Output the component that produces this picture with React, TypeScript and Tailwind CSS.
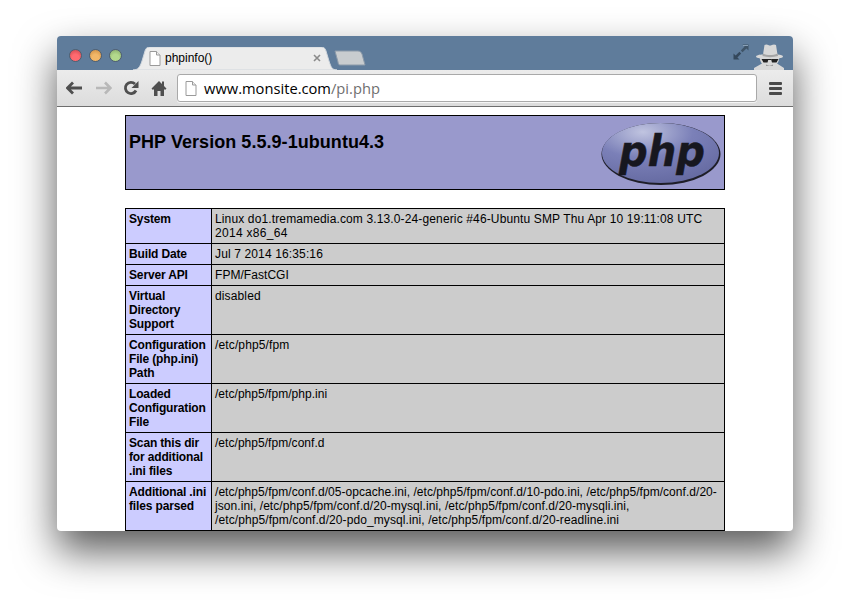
const SANS = "font-['Liberation_Sans',Arial,sans-serif]";

const rows: [string, [string, string][], string][] = [
  [
    "System",
    [
      ["Linux do1.tremamedia.com 3.13.0-24-generic #46-Ubuntu SMP Thu Apr 10 19:11:08 UTC", "tracking-[0.135px]"],
      ["2014 x86_64", "tracking-[0.3px]"],
    ],
    "h-[35px]",
  ],
  ["Build Date", [["Jul 7 2014 16:35:16", "tracking-[0.135px]"]], "h-[21px]"],
  ["Server API", [["FPM/FastCGI", "tracking-[0.05px]"]], "h-[21px]"],
  ["Virtual Directory Support", [["disabled", "tracking-[0.135px]"]], "h-[49px]"],
  ["Configuration File (php.ini) Path", [["/etc/php5/fpm", "tracking-[0.135px]"]], "h-[49px]"],
  ["Loaded Configuration File", [["/etc/php5/fpm/php.ini", "tracking-[0.04px]"]], "h-[49px]"],
  ["Scan this dir for additional .ini files", [["/etc/php5/fpm/conf.d", "tracking-[0.04px]"]], "h-[49px]"],
  [
    "Additional .ini files parsed",
    [
      ["/etc/php5/fpm/conf.d/05-opcache.ini, /etc/php5/fpm/conf.d/10-pdo.ini, /etc/php5/fpm/conf.d/20-", "tracking-[0.045px]"],
      ["json.ini, /etc/php5/fpm/conf.d/20-mysql.ini, /etc/php5/fpm/conf.d/20-mysqli.ini,", "tracking-[0.07px]"],
      ["/etc/php5/fpm/conf.d/20-pdo_mysql.ini, /etc/php5/fpm/conf.d/20-readline.ini", "tracking-[0.095px]"],
    ],
    "h-[49px]",
  ],
];

function PageIcon({ className }: { className: string }) {
  return (
    <svg viewBox="0 0 12 15" className={className}>
      <path d="M1 .5h6.5L11 4v10.5H1z" fill="#fff" stroke="#9a9a9a" />
      <path d="M7.5.5V4H11" fill="#eee" stroke="#9a9a9a" />
    </svg>
  );
}

function Light({ color, ring }: { color: string; ring: string }) {
  return (
    <div
      className="h-[13px] w-[13px] rounded-full border"
      style={{ background: `radial-gradient(circle at 50% 70%, ${color} 35%, ${ring} 100%)`, borderColor: "#4f5f70" }}
    />
  );
}

function Logo() {
  return (
    <svg viewBox="0 0 120 64" className="h-[64px] w-[120px]">
      <defs>
        <radialGradient id="lg" cx="0.35" cy="0.15" r="0.95">
          <stop offset="0" stopColor="#c0c4e0" />
          <stop offset="0.45" stopColor="#7b80b8" />
          <stop offset="1" stopColor="#62679e" />
        </radialGradient>
      </defs>
      <ellipse cx="60" cy="32" rx="59.5" ry="31" fill="#1e1e28" />
      <ellipse cx="59.5" cy="31" rx="58.5" ry="30" fill="url(#lg)" />
      <text
        x="18"
        y="44"
        fontFamily="'DejaVu Sans',sans-serif"
        fontWeight="700"
        fontStyle="italic"
        fontSize="42"
        textLength="86"
        lengthAdjust="spacingAndGlyphs"
        fill="#17171f"
        stroke="#17171f"
        strokeWidth="0.5"
      >
        php
      </text>
    </svg>
  );
}

export default function App() {
  return (
    <div className="h-[610px] w-[850px] overflow-hidden bg-white pl-[57px] pt-[36px]">
      <div className="flex h-[495px] w-[736px] flex-col overflow-hidden rounded-[4px] bg-white shadow-[0_20px_40px_rgba(0,0,0,0.65)]">
        {/* title bar */}
        <div className="flex h-[34px] shrink-0 items-end bg-[#5f7c9b]">
          <div className="flex h-full w-[76px] items-center gap-[7px] self-start pl-[12px] pt-[4px]">
            <Light color="#ff6a70" ring="#c9454c" />
            <Light color="#f2b768" ring="#c98a40" />
            <Light color="#b3d98c" ring="#85a868" />
          </div>
          <div className="relative h-[23px] w-[204px]">
            <svg viewBox="0 0 204 23" className="absolute inset-0 h-full w-full">
              <path d="M0 23C5 23 7 20 9 14L12 4C13 1 14 0 18 0H187C191 0 192 1 193 4L196 14C198 20 199 23 204 23Z" fill="#ececec" stroke="#d0d6dc" />
            </svg>
            <div className="relative flex h-full items-center pb-[1px] pl-[16px] pr-[16px]">
              <PageIcon className="h-[15px] w-[12px]" />
              <span className={`ml-[4px] flex-1 text-[12px] text-black ${SANS}`}>phpinfo()</span>
              <svg viewBox="0 0 8 8" className="h-[8px] w-[8px]">
                <path d="M1 1l6 6M7 1L1 7" stroke="#8a8a8a" strokeWidth="1.6" />
              </svg>
            </div>
          </div>
          <svg viewBox="0 0 32 17" className="mb-[3px] ml-[-3px] h-[17px] w-[32px]">
            <path d="M1 1H24C26 1 27 2 28 4L31 15H6C5 15 4 14 4 12Z" fill="#c8cccf" stroke="#8c9aa9" />
          </svg>
          <div className="flex h-full flex-1 items-end justify-end pr-[7px]">
            <svg viewBox="0 0 16 16" className="mb-[10px] mr-[3px] h-[16px] w-[16px]">
              <path d="M9.5 0.5H15.5V6.5L13.4 4.4 9.6 8.2 7.8 6.4 11.6 2.6Z" fill="#3f5468" />
              <path d="M6.5 15.5H0.5V9.5L2.6 11.6 6.4 7.8 8.2 9.6 4.4 13.4Z" fill="#34485c" />
              <path d="M10 1H15V2H10Z" fill="#8aa0b6" />
            </svg>
            <svg viewBox="0 0 34 27" className="h-[27px] w-[34px]">
              <path d="M11 11.5L12.5 2C15 0.5 16.5 2.5 18 2.5S21.5 0.5 24 2L25.5 11.5C29 11.5 31 12.5 31 13.5S29 15 27 15.5C27 18 26 19.5 25 20.5L32 25V27H2V25L10 20.5C9 19.5 8 18 8 15.5C6 15 4 14.5 4 13.5S7 11.5 11 11.5Z" fill="#d8d8d8" />
              <path d="M11 10.5C15 12.5 21 12.5 25.5 10.5L26 13C21 14.5 15 14.5 10.5 13Z" fill="#a4a4a4" />
              <path d="M9.5 16H16.5L15.5 19.5H11.5ZM19 16H26.5L24.5 19.5H20ZM16 16H19V17H16Z" fill="#222" />
              <path d="M14 21.5C16 23 19 23 21 21.5V23H14Z" fill="#9a9a9a" />
            </svg>
          </div>
        </div>
        {/* toolbar */}
        <div className="flex h-[37px] shrink-0 items-center border-b border-[#6e6e6e] bg-gradient-to-b from-[#ececec] to-[#dcdcdc] pl-[9px] pr-[11px]">
          <svg viewBox="0 0 16 14" className="h-[14px] w-[16px]">
            <path d="M7 1.5L1.5 7 7 12.5M2 7h14" fill="none" stroke="#4f4f4f" strokeWidth="2.8" />
          </svg>
          <svg viewBox="0 0 16 14" className="ml-[14px] h-[14px] w-[16px]">
            <path d="M9 1.5L14.5 7 9 12.5M14 7H0" fill="none" stroke="#b8b8b8" strokeWidth="2.6" />
          </svg>
          <svg viewBox="0 0 16 16" className="ml-[11px] h-[16px] w-[16px]">
            <path d="M13 10.5A5.6 5.6 0 1 1 12 4" fill="none" stroke="#4f4f4f" strokeWidth="2.8" />
            <path d="M15.5 1v7h-7z" fill="#4f4f4f" />
          </svg>
          <svg viewBox="0 0 16 16" className="ml-[12px] h-[16px] w-[16px]">
            <path d="M8 1L0.5 8.5 2 10 3 9v7h3.5v-5h3v5H13V9l1 1 1.5-1.5L13 6V1.5h-2V4z" fill="#4f4f4f" />
          </svg>
          <div className="ml-[10px] flex h-[28px] w-[580px] items-center rounded-[3px] border border-[#a9a9a9] bg-white pl-[7px] shadow-[0_1px_0_#f5f5f5]">
            <PageIcon className="h-[15px] w-[12px]" />
            <span className="ml-[7px] text-[14.7px] text-black font-['Open_Sans',sans-serif]">
              www.monsite.com<span className="text-[#6f6f6f]">/pi.php</span>
            </span>
          </div>
          <div className="ml-auto flex w-[13px] flex-col gap-[2px]">
            <div className="h-[3px] rounded-[1px] bg-[#4a4a4a]" />
            <div className="h-[3px] rounded-[1px] bg-[#4a4a4a]" />
            <div className="h-[3px] rounded-[1px] bg-[#4a4a4a]" />
          </div>
        </div>
        {/* page */}
        <div className={`flex-1 overflow-hidden pl-[68px] pt-[8px] text-[12px] leading-[14px] text-black ${SANS}`}>
          <div className="flex h-[75px] w-[600px] items-start justify-between border border-black bg-[#9999cc] pl-[3px] pr-[3px] pt-[6px]">
            <h1 className="mt-[10px] text-[18px] font-bold leading-[20px] tracking-[0.05px]">PHP Version 5.5.9-1ubuntu4.3</h1>
            <Logo />
          </div>
          <table className="mt-[18px] w-[600px] table-fixed border-collapse">
            <colgroup>
              <col className="w-[86px]" />
              <col />
            </colgroup>
            <tbody>
              {rows.map(([k, v, h]) => (
                <tr key={k} className={h}>
                  <td className="border border-black bg-[#ccccff] px-[3px] py-[3px] align-top font-bold tracking-[-0.15px]">{k}</td>
                  <td className="border border-black bg-[#cccccc] px-[3px] py-[3px] align-top">
                    {v.map(([l, t]) => (
                      <div key={l} className={`whitespace-nowrap ${t}`}>{l}</div>
                    ))}
                  </td>
                </tr>
              ))}
            </tbody>
          </table>
        </div>
      </div>
    </div>
  );
}
